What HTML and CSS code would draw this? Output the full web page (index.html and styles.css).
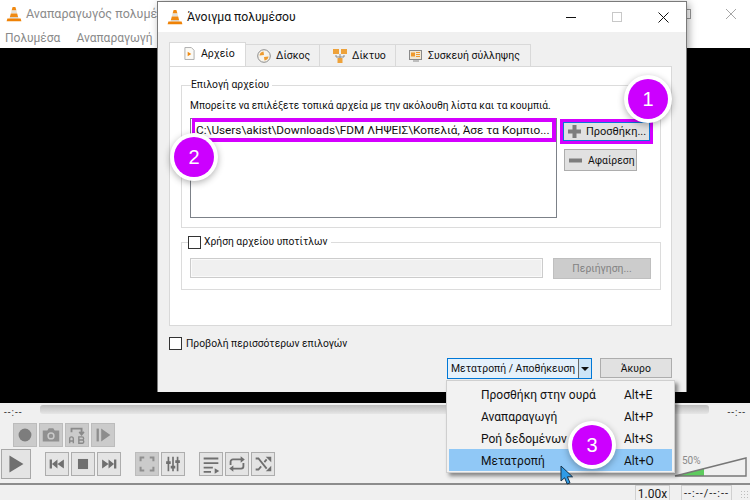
FILE: index.html
```html
<!DOCTYPE html>
<html lang="el">
<head>
<meta charset="utf-8">
<title>VLC</title>
<link rel="stylesheet" href="styles.css">
</head>
<body>
<svg class="defs" width="0" height="0">
  <symbol id="cone" viewBox="0 0 16 16">
    <path d="M6.600 1h2.800l1 3.600H5.600z" fill="#f08a12"/>
    <path d="M5.600 4.600h4.800l.8 3H4.800z" fill="#e4e0d8"/>
    <path d="M4.800 7.600h6.400l.9 3.400H3.900z" fill="#f08a12"/>
    <path d="M3.900 11h8.200l.5 1.600H3.400z" fill="#d8d4cc"/>
    <path d="M1.400 12.600h13.200l.8 2.600H.6z" fill="#ef8206"/>
  </symbol>
</svg>

<div class="app">
  <header class="titlebar">
    <svg class="cone"><use href="#cone"/></svg>
    <span class="app-title">Αναπαραγωγός πολυμέ</span>
    <svg class="app-max" width="10" height="10"><rect x=".5" y=".5" width="9" height="9" fill="none" stroke="#9a9a9a"/></svg>
    <svg class="app-close" width="12" height="12"><path d="M1 1l10 10M11 1L1 11" stroke="#a6a6a6" fill="none"/></svg>
  </header>
  <nav class="menubar"><span>Πολυμέσα</span><span>Αναπαραγωγή</span></nav>
  <main class="video"></main>
  <section class="controls">
    <div class="seek-row">
      <span class="time">--:--</span>
      <div class="seek"></div>
      <span class="time">--:--</span>
    </div>
    <div class="row-adv">
      <button class="cb off"><svg viewBox="0 0 24 24"><circle cx="12" cy="12" r="7" fill="#7d7d7d"/></svg></button>
      <button class="cb off"><svg viewBox="0 0 24 24"><path d="M3 7h5l1.500-2.500h5L16 7h5v12H3z" fill="#909090"/><circle cx="12" cy="13" r="4" fill="#cacaca"/><circle cx="12" cy="13" r="2.400" fill="#909090"/></svg></button>
      <button class="cb off"><svg viewBox="0 0 24 24"><path d="M6 9V5h11v5M14.500 8.500l2.500 3 2.500-3" fill="none" stroke="#8a8a8a" stroke-width="2"/><path d="M4 21v-5a2 2 0 014 0v5M4 18.500h4M14 14h3.500a1.700 1.700 0 010 3.500H14zm0 3.500h4a1.800 1.800 0 010 3.500h-4z" fill="none" stroke="#8a8a8a" stroke-width="1.500"/></svg></button>
      <button class="cb off"><svg viewBox="0 0 24 24"><path d="M5 5h2.500v14H5z" fill="#8d8d8d"/><path d="M10 5l10 7-10 7z" fill="#8d8d8d"/></svg></button>
    </div>
    <div class="row-main">
      <button class="cb play"><svg viewBox="0 0 30 30"><path d="M8 6l15 9-15 9z" fill="#6f6f6f"/></svg></button>
      <div class="btn-group first">
        <button class="cb"><svg viewBox="0 0 24 24"><path d="M4 7h2.500v10H4zM12.500 7v10L6.500 12zM19.500 7v10l-7-5z" fill="#6f6f6f"/></svg></button>
        <button class="cb"><svg viewBox="0 0 24 24"><path d="M6.500 6.500h11v11h-11z" fill="#6f6f6f"/></svg></button>
        <button class="cb"><svg viewBox="0 0 24 24"><path d="M4.500 7v10l7-5zM11.500 7v10l6-5zM17.500 7H20v10h-2.500z" fill="#6f6f6f"/></svg></button>
      </div>
      <div class="btn-group">
        <button class="cb off"><svg viewBox="0 0 24 24"><path d="M5 9V5h4M15 5h4v4M19 15v4h-4M9 19H5v-4" fill="none" stroke="#8f8f8f" stroke-width="2.200"/></svg></button>
        <button class="cb"><svg viewBox="0 0 24 24"><path d="M7 4v16M12 4v16M17 4v16" stroke="#6f6f6f" stroke-width="1.800"/><path d="M4.500 9h5v3h-5zM9.500 14h5v3h-5zM14.500 8h5v3h-5z" fill="#6f6f6f"/></svg></button>
      </div>
      <div class="btn-group">
        <button class="cb"><svg viewBox="0 0 24 24"><path d="M4 6h16M4 11h16M4 16h10M4 20.500h8" stroke="#6f6f6f" stroke-width="2"/><path d="M16 16.500l5 3-5 3z" fill="#6f6f6f"/></svg></button>
        <button class="cb"><svg viewBox="0 0 24 24"><path d="M5 13V9.500A2.500 2.500 0 017.500 7H18M19 11v3.500a2.500 2.500 0 01-2.500 2.500H6" fill="none" stroke="#6f6f6f" stroke-width="2"/><path d="M16 3.500l4.500 3.500-4.500 3.500zM8 13.500L3.500 17 8 20.500z" fill="#6f6f6f"/></svg></button>
        <button class="cb"><svg viewBox="0 0 24 24"><path d="M4 6h3l9 11M4 18h3l3-3.500M13.500 10L16 7" fill="none" stroke="#6f6f6f" stroke-width="2"/><path d="M15 4h6v6zM15 20h6v-6z" fill="#6f6f6f"/></svg></button>
      </div>
    </div>
    <div class="volume">
      <span class="vol-label">50%</span>
      <svg width="73" height="20" viewBox="0 0 73 20">
        <path d="M1 19L30 11.500V19z" fill="#5ecb5e"/>
        <path d="M1 19L72 1V19z" fill="none" stroke="#777" stroke-width="1.400"/>
      </svg>
    </div>
    <footer class="statusbar">
      <span class="st-box st-speed">1.00x</span>
      <span class="st-box st-time">--:--/--:--</span>
      <span class="grip"></span>
    </footer>
  </section>
</div>

<section class="dialog">
  <header class="dlg-title">
    <svg class="cone"><use href="#cone"/></svg>
    <span class="dlg-name">Άνοιγμα πολυμέσου</span>
    <div class="win-btns">
      <svg width="10" height="10"><path d="M0 5.500h10" stroke="#111"/></svg>
      <svg width="10" height="10"><rect x=".5" y=".5" width="9" height="9" fill="none" stroke="#c8c8c8"/></svg>
      <svg width="11" height="11"><path d="M.5.500l10 10M10.500.500l-10 10" stroke="#111" fill="none"/></svg>
    </div>
  </header>
  <div class="dlg-body">
    <div class="tabs">
      <div class="tab active">
        <svg viewBox="0 0 12 14" width="11" height="13"><path d="M1 .5h7l3 3v10H1z" fill="#fbfaf6" stroke="#a8a8a8"/><path d="M4 5l4 2.500L4 10z" fill="#f08a12"/></svg>
        <span>Αρχείο</span>
      </div>
      <div class="tab t-disc">
        <svg viewBox="0 0 14 14" width="14" height="14"><circle cx="7" cy="7" r="6.300" fill="#f6f3ec" stroke="#8d8d8d"/><path d="M2.500 6.500A4.500 4.500 0 016.500 2.500L7 6zM11.500 7.500A4.500 4.500 0 017.500 11.500L7 8z" fill="#ee9a2d"/></svg>
        <span>Δίσκος</span>
      </div>
      <div class="tab t-net">
        <svg viewBox="0 0 14 14" width="14" height="14"><path d="M7 5v4M3 6v2h8V6" fill="none" stroke="#8a8a8a"/><path d="M0 0h6v5H0zM8 0h6v5H8zM4.500 9h5v5h-5z" fill="#eea23a"/></svg>
        <span>Δίκτυο</span>
      </div>
      <div class="tab t-cap">
        <svg viewBox="0 0 14 13" width="14" height="13"><rect x=".5" y="1.500" width="12" height="9" fill="#f2e9d6" stroke="#8a8a8a"/><path d="M2 3.500h4v4H2z" fill="#ef9a2e"/><path d="M7 3.500h4M7 5.500h4M7 7.500h4" stroke="#ef9a2e"/><path d="M4 12h6" stroke="#8a8a8a"/></svg>
        <span>Συσκευή σύλληψης</span>
      </div>
    </div>
    <div class="pane">
      <fieldset class="group g-file">
        <legend>Επιλογή αρχείου</legend>
        <p class="hint">Μπορείτε να επιλέξετε τοπικά αρχεία με την ακόλουθη λίστα και τα κουμπιά.</p>
        <div class="file-row">
          <div class="filelist">
            <div class="file-item">C:\Users\akist\Downloads\FDM ΛΗΨΕΙΣ\Κοπελιά, Άσε τα Κομπιο...</div>
          </div>
          <div class="file-btns">
            <button class="btn add">
              <svg width="15" height="15" viewBox="0 0 15 15"><path d="M5.500 1h4v4.500H14v4H9.500V14h-4V9.500H1v-4h4.500z" fill="#7d7d7d"/></svg>
              <span>Προσθήκη...</span>
            </button>
            <button class="btn remove">
              <svg width="15" height="15" viewBox="0 0 15 15"><path d="M1 5.500h13v4H1z" fill="#7d7d7d"/></svg>
              <span>Αφαίρεση</span>
            </button>
          </div>
        </div>
      </fieldset>
      <fieldset class="group g-sub">
        <legend><span class="check"></span><span>Χρήση αρχείου υποτίτλων</span></legend>
        <div class="sub-row">
          <div class="sub-input"></div>
          <button class="btn browse">Περιήγηση...</button>
        </div>
      </fieldset>
    </div>
    <label class="more"><span class="check"></span><span>Προβολή περισσότερων επιλογών</span></label>
    <div class="actions">
      <div class="split"><span class="split-text">Μετατροπή / Αποθήκευση</span><span class="split-arrow"><i></i></span></div>
      <button class="btn cancel">Άκυρο</button>
    </div>
  </div>
</section>

<ul class="menu">
  <li><span>Προσθήκη στην ουρά</span><kbd>Alt+E</kbd></li>
  <li><span>Αναπαραγωγή</span><kbd>Alt+P</kbd></li>
  <li><span>Ροή δεδομένων</span><kbd>Alt+S</kbd></li>
  <li class="hot"><span>Μετατροπή</span><kbd>Alt+O</kbd></li>
</ul>

<div class="badge b1">1</div>
<div class="badge b2">2</div>
<div class="badge b3">3</div>

<svg class="pointer" width="14" height="20" viewBox="0 0 14 20"><path d="M1 1v15l3.600-3.200L7.200 19l2.800-1.200-2.600-6H12.500z" fill="#2f9be6" stroke="#15324a"/></svg>
</body>
</html>
```

FILE: styles.css
```css
* { box-sizing: border-box; }
html, body { margin: 0; padding: 0; }
body {
  width: 750px;
  height: 500px;
  overflow: hidden;
  position: relative;
  font-family: Roboto, "Open Sans", sans-serif;
  font-size: 10.300px;
  color: #1a1a1a;
  background: #f0f0f0;
}
.defs { position: absolute; }
button { font: inherit; color: inherit; padding: 0; margin: 0; }
.cone { width: 16px; height: 16px; flex: none; }

/* main window */
.app { display: flex; flex-direction: column; width: 750px; height: 500px; }
.titlebar {
  height: 32px; flex: none; background: #fff;
  display: flex; align-items: center; padding: 0 13px 5px 5px;
}
.titlebar .cone { margin-left: 1px; }
.app-title { margin-left: 4px; font-size: 12.500px; color: #8b8b8b; white-space: nowrap; }
.app-max { margin-left: auto; }
.app-close { margin-left: 34px; }
.menubar {
  height: 16px; flex: none; background: #fff;
  display: flex; gap: 16px; padding-left: 5px;
  font-size: 12px; color: #8a8a8a; line-height: 12px; white-space: nowrap;
}
.video { flex: 1; background: #000; }
.controls { flex: none; height: 97px; background: #f0f0f0; position: relative; }

.seek-row { display: flex; align-items: center; height: 20px; padding: 0 4px; }
.time { font-size: 10px; letter-spacing: 1px; width: 36px; color: #333; line-height: 20px; }
.seek-row .time:last-child { text-align: right; width: 37px; }
.seek {
  width: 669px; height: 9px; border-radius: 3px;
  background: linear-gradient(#bdbdbd, #e6e6e6);
  margin-top: -7px;
}
.row-adv { display: flex; gap: 2px; padding-left: 13px; }
.row-main { display: flex; align-items: center; margin-top: 2px; padding-left: 1px; }
.btn-group { display: flex; gap: 2px; margin-left: 14px; }
.cb {
  width: 24px; height: 24px; flex: none; display: block;
  background: #e4e4e4; border: 1px solid #adadad;
}
.cb svg { width: 22px; height: 22px; display: block; }
.cb.off { background: #cbcbcb; border-color: #bcbcbc; }
.cb.play { width: 30px; height: 30px; border-color: #a8a8a8; }
.cb.play svg { width: 28px; height: 28px; }

.volume { position: absolute; right: 3px; top: 54px; width: 73px; height: 20px; }
.volume svg { display: block; }
.vol-label { position: absolute; left: 8px; top: -2px; font-size: 10px; color: #8a8a8a; }

.statusbar {
  position: absolute; left: 0; right: 0; top: 80px; height: 17px;
  border-top: 2px solid #8c8c8c; background: #f0f0f0;
  display: flex; justify-content: flex-end; padding-right: 18px;
}
.st-box { height: 15px; font-size: 12px; line-height: 16px; border: 1px solid #d0d0d0; border-bottom: 0; white-space: nowrap; text-align: center; }
.st-speed { width: 35px; }
.st-time { margin-left: 11px; width: 51px; font-size: 11px; letter-spacing: 1px; }
.grip {
  position: absolute; right: 1px; bottom: 1px; width: 9px; height: 9px;
  background: radial-gradient(circle, #bdbdbd 1px, transparent 1px) 0 0 / 3px 3px;
}

/* dialog */
.dialog {
  position: absolute; left: 157px; top: 1px; width: 530px; height: 391px;
  background: #f0f0f0; border: 1px solid #7a7a7a; border-bottom: 0;
  display: flex; flex-direction: column;
  box-shadow: 2px 2px 8px rgba(0,0,0,.35);
}
.dlg-title {
  height: 30px; flex: none; background: #fff;
  display: flex; align-items: center; padding: 0 17px 0 9px;
}
.dlg-name { margin-left: 4px; font-size: 12.200px; color: #111; }
.win-btns { margin-left: auto; display: flex; align-items: center; gap: 36px; }
.win-btns svg { display: block; }
.dlg-body { flex: 1; padding: 11px 14px 0 11px; display: flex; flex-direction: column; }

.tabs { display: flex; height: 23px; position: relative; z-index: 1; }
.tab {
  display: flex; align-items: center; gap: 5px; height: 22px; margin-top: 1px;
  padding-left: 11px; background: #f0f0f0;
  border: 1px solid #d9d9d9; border-bottom: 0; border-left: 0;
  font-size: 10.500px; white-space: nowrap; color: #111;
}
.tab.active {
  width: 77px; height: 24px; margin-top: -1px; padding-left: 14px; padding-bottom: 3px; gap: 6px;
  background: #fff; border-left: 1px solid #d9d9d9;
}
.t-disc { width: 74px; }
.t-net { width: 76px; padding-left: 13px; }
.t-cap { width: 135px; padding-left: 13px; }
.pane {
  height: 260px; background: #fff; border: 1px solid #d9d9d9;
  padding: 11px 10px 0 11px; width: 503px;
}
.group { margin: 0; padding: 0; border: 1px solid #dcdcdc; min-width: 0; }
.group legend { padding: 0 3px 0 0; margin-left: 1px; font-size: 10.300px; line-height: 14px; color: #111; }
.g-file { height: 150px; padding: 7px 8px 0 8px; }
.hint { margin: 0; font-size: 10.200px; line-height: 14px; color: #111; white-space: nowrap; }
.file-row { display: flex; margin-top: 5px; }
.filelist { width: 367px; height: 100px; background: #fff; border: 1px solid #7c8188; flex: none; }
.file-item {
  height: 24px; margin: -1px 0 0 1px;
  border: solid #d400ff; border-width: 4px 4px 4px 3px;
  padding-left: 1px; line-height: 16px; font-size: 11.800px; white-space: nowrap;
  overflow: hidden; color: #111;
}
.file-btns { display: flex; flex-direction: column; gap: 5px; margin-left: 3px; margin-top: 1px; }
.btn {
  background: #e1e1e1; border: 1px solid #adadad; font-size: 10.400px; color: #111;
  display: flex; align-items: center; white-space: nowrap;
}
.add {
  width: 93px; height: 25px; border: 3px solid #d400ff; outline: 1px solid #0a78d7; outline-offset: -4px;
  padding-left: 4px; gap: 4px; font-size: 11px;
}
.remove { width: 73px; height: 22px; margin-left: 4px; padding-left: 3px; gap: 5px; }
.g-sub { height: 55px; margin-top: 7px; padding: 9px 9px 0 8px; }
.g-sub legend { display: flex; align-items: center; gap: 3px; margin-left: -2px; height: 14px; padding-right: 4px; }
.check { width: 13px; height: 13px; background: #fff; border: 1px solid #333; display: block; flex: none; }
.sub-row { display: flex; justify-content: space-between; }
.sub-input { width: 353px; height: 20px; background: #f0f0f0; border: 1px solid #ccc; box-shadow: inset 0 0 0 1px #fafafa; }
.browse { width: 98px; height: 21px; background: #ccc; border-color: #bfbfbf; color: #838383; justify-content: center; }
.more { display: flex; align-items: center; gap: 4px; margin-top: 10px; height: 14px; color: #111; }
.actions { display: flex; align-items: flex-start; margin-top: 8px; margin-left: 278px; }
.split {
  width: 146px; height: 21px; background: #e5f1fb; border: 1px solid #0078d7; display: flex; align-items: center;
  font-size: 10.400px; color: #111;
}
.split-text { flex: 1; padding-left: 3px; white-space: nowrap; height: 19px; line-height: 19px; background: #e5f1fb; }
.split-arrow { width: 13px; height: 19px; background: #cce4f7; border-left: 1px solid #6a6a6a; display: flex; align-items: center; justify-content: center; }
.split-arrow i { width: 0; height: 0; border: 4px solid transparent; border-top: 4px solid #111; border-bottom: 0; display: block; }
.cancel { width: 73px; height: 20px; margin-left: 8px; justify-content: center; }

/* popup */
.menu {
  position: absolute; left: 446px; top: 380px; width: 229px; height: 93px;
  margin: 0; padding: 2px; list-style: none;
  background: #f2f2f2; border: 1px solid #cfcfcf;
  box-shadow: 3px 3px 4px rgba(0,0,0,.45);
  display: flex; flex-direction: column;
}
.menu li {
  height: 22px; flex: none; display: flex; align-items: center;
  padding: 1px 0 0 32px; font-size: 12px; color: #111; white-space: nowrap;
}
.menu li span { width: 143px; }
.menu kbd { font: inherit; }
.menu .hot { background: #90c8f6; }

/* annotations */
.badge {
  position: absolute; width: 40px; height: 40px; border-radius: 50%;
  background: #cc00ff; color: #fff;
  font-family: "Liberation Sans", sans-serif; font-size: 20px; line-height: 40px; text-align: center;
  box-shadow: 0 0 0 4px #fff, 0 2px 7px 4px rgba(0,0,0,.3);
}
.b1 { left: 628px; top: 79px; }
.b2 { left: 174px; top: 137px; }
.b3 { left: 572px; top: 425px; }
.pointer { position: absolute; left: 560px; top: 465px; }
```
